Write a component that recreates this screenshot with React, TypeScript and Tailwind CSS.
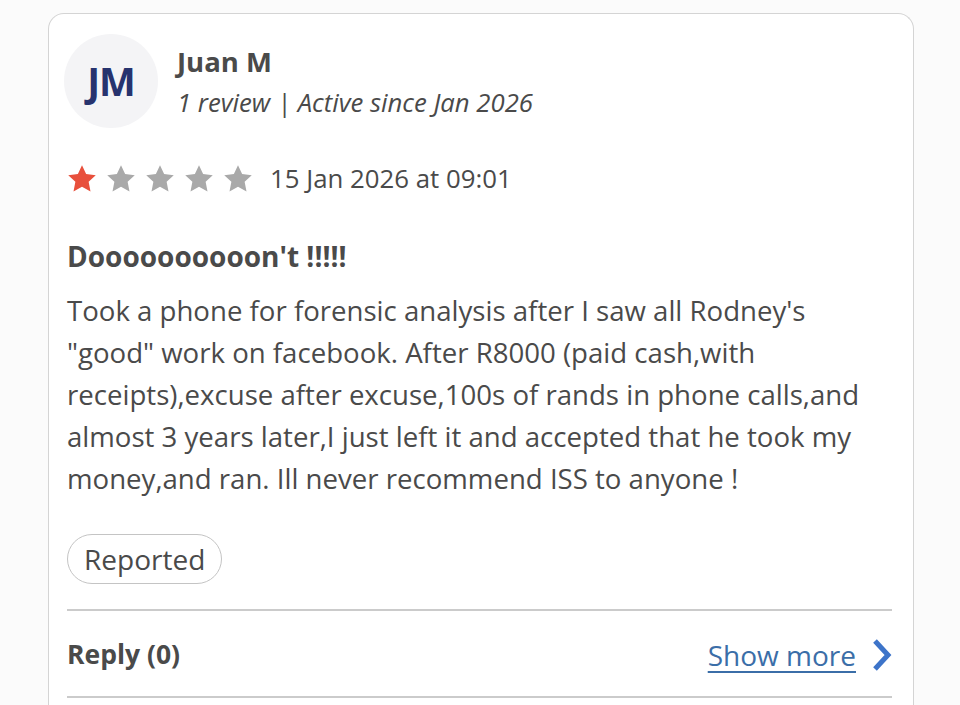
export default function App() {
  return (
    <main className="min-h-screen bg-[#fbfbfb] pt-[13px] pl-[48px] pr-[46px] font-['Open_Sans',sans-serif] text-[#4a4a4a]">
      <div className="rounded-t-[16px] border border-b-0 border-[#d4d4d4] bg-white pl-[18px] pr-[21px] pt-[20px]">
        <div className="flex items-start">
          <div className="-ml-[3px] flex h-[94px] w-[94px] items-center justify-center rounded-full bg-[#f4f4f6]">
            <span className="text-[39px] font-bold tracking-[-1px] text-[#27336e]">JM</span>
          </div>
          <div className="ml-[19px] mt-[10px]">
            <div className="text-[27.5px] font-bold leading-[36px]">Juan M</div>
            <div className="text-[25.7px] italic leading-[46px]">1 review | Active since Jan 2026</div>
          </div>
        </div>

        <div className="mt-[31px] flex items-center">
          <div className="flex gap-[9px]">
            {[0, 1, 2, 3, 4].map((i) => (
              <svg key={i} width="30" height="29" viewBox="0 0 24 23">
                <path
                  d="M12 0.8l3.3 7.1 7.7.9-5.7 5.3 1.5 7.7L12 18l-6.8 3.8 1.5-7.7L1 8.8l7.7-.9z"
                  fill={i === 0 ? "#e8503c" : "#a9a9a9"}
                />
              </svg>
            ))}
          </div>
          <span className="ml-[17px] text-[25.8px]">15 Jan 2026 at 09:01</span>
        </div>

        <h2 className="mt-[41px] text-[28px] font-bold leading-[34px]">Doooooooooon't !!!!!</h2>
        <p className="mt-[16px] text-[27.6px] leading-[42px]">
          Took a phone for forensic analysis after I saw all Rodney's "good" work on facebook. After R8000 (paid cash,with
          receipts),excuse after excuse,100s of rands in phone calls,and almost 3 years later,I just left it and accepted that
          he took my money,and ran. Ill never recommend ISS to anyone !
        </p>

        <div className="mt-[35px]">
          <span className="inline-flex h-[50px] items-center rounded-full border border-[#c4c4c4] px-[16px] text-[28px]">
            Reported
          </span>
        </div>

        <div className="mt-[25px] border-t-2 border-[#cbcbcb]" />
        <div className="flex h-[85px] items-center justify-between pt-[4px]">
          <span className="text-[26.5px] font-bold">Reply (0)</span>
          <a href="#" className="flex items-center text-[28px] text-[#3b6ea8]">
            <span className="underline decoration-2 underline-offset-[5px]">Show more</span>
            <svg className="ml-[16px]" width="20" height="34" viewBox="0 0 20 34">
              <path d="M3 3l13 14L3 31" fill="none" stroke="#3d74c9" strokeWidth="5" />
            </svg>
          </a>
        </div>
        <div className="border-t-2 border-[#cbcbcb]" />
        <div className="h-[40px]" />
      </div>
    </main>
  );
}
